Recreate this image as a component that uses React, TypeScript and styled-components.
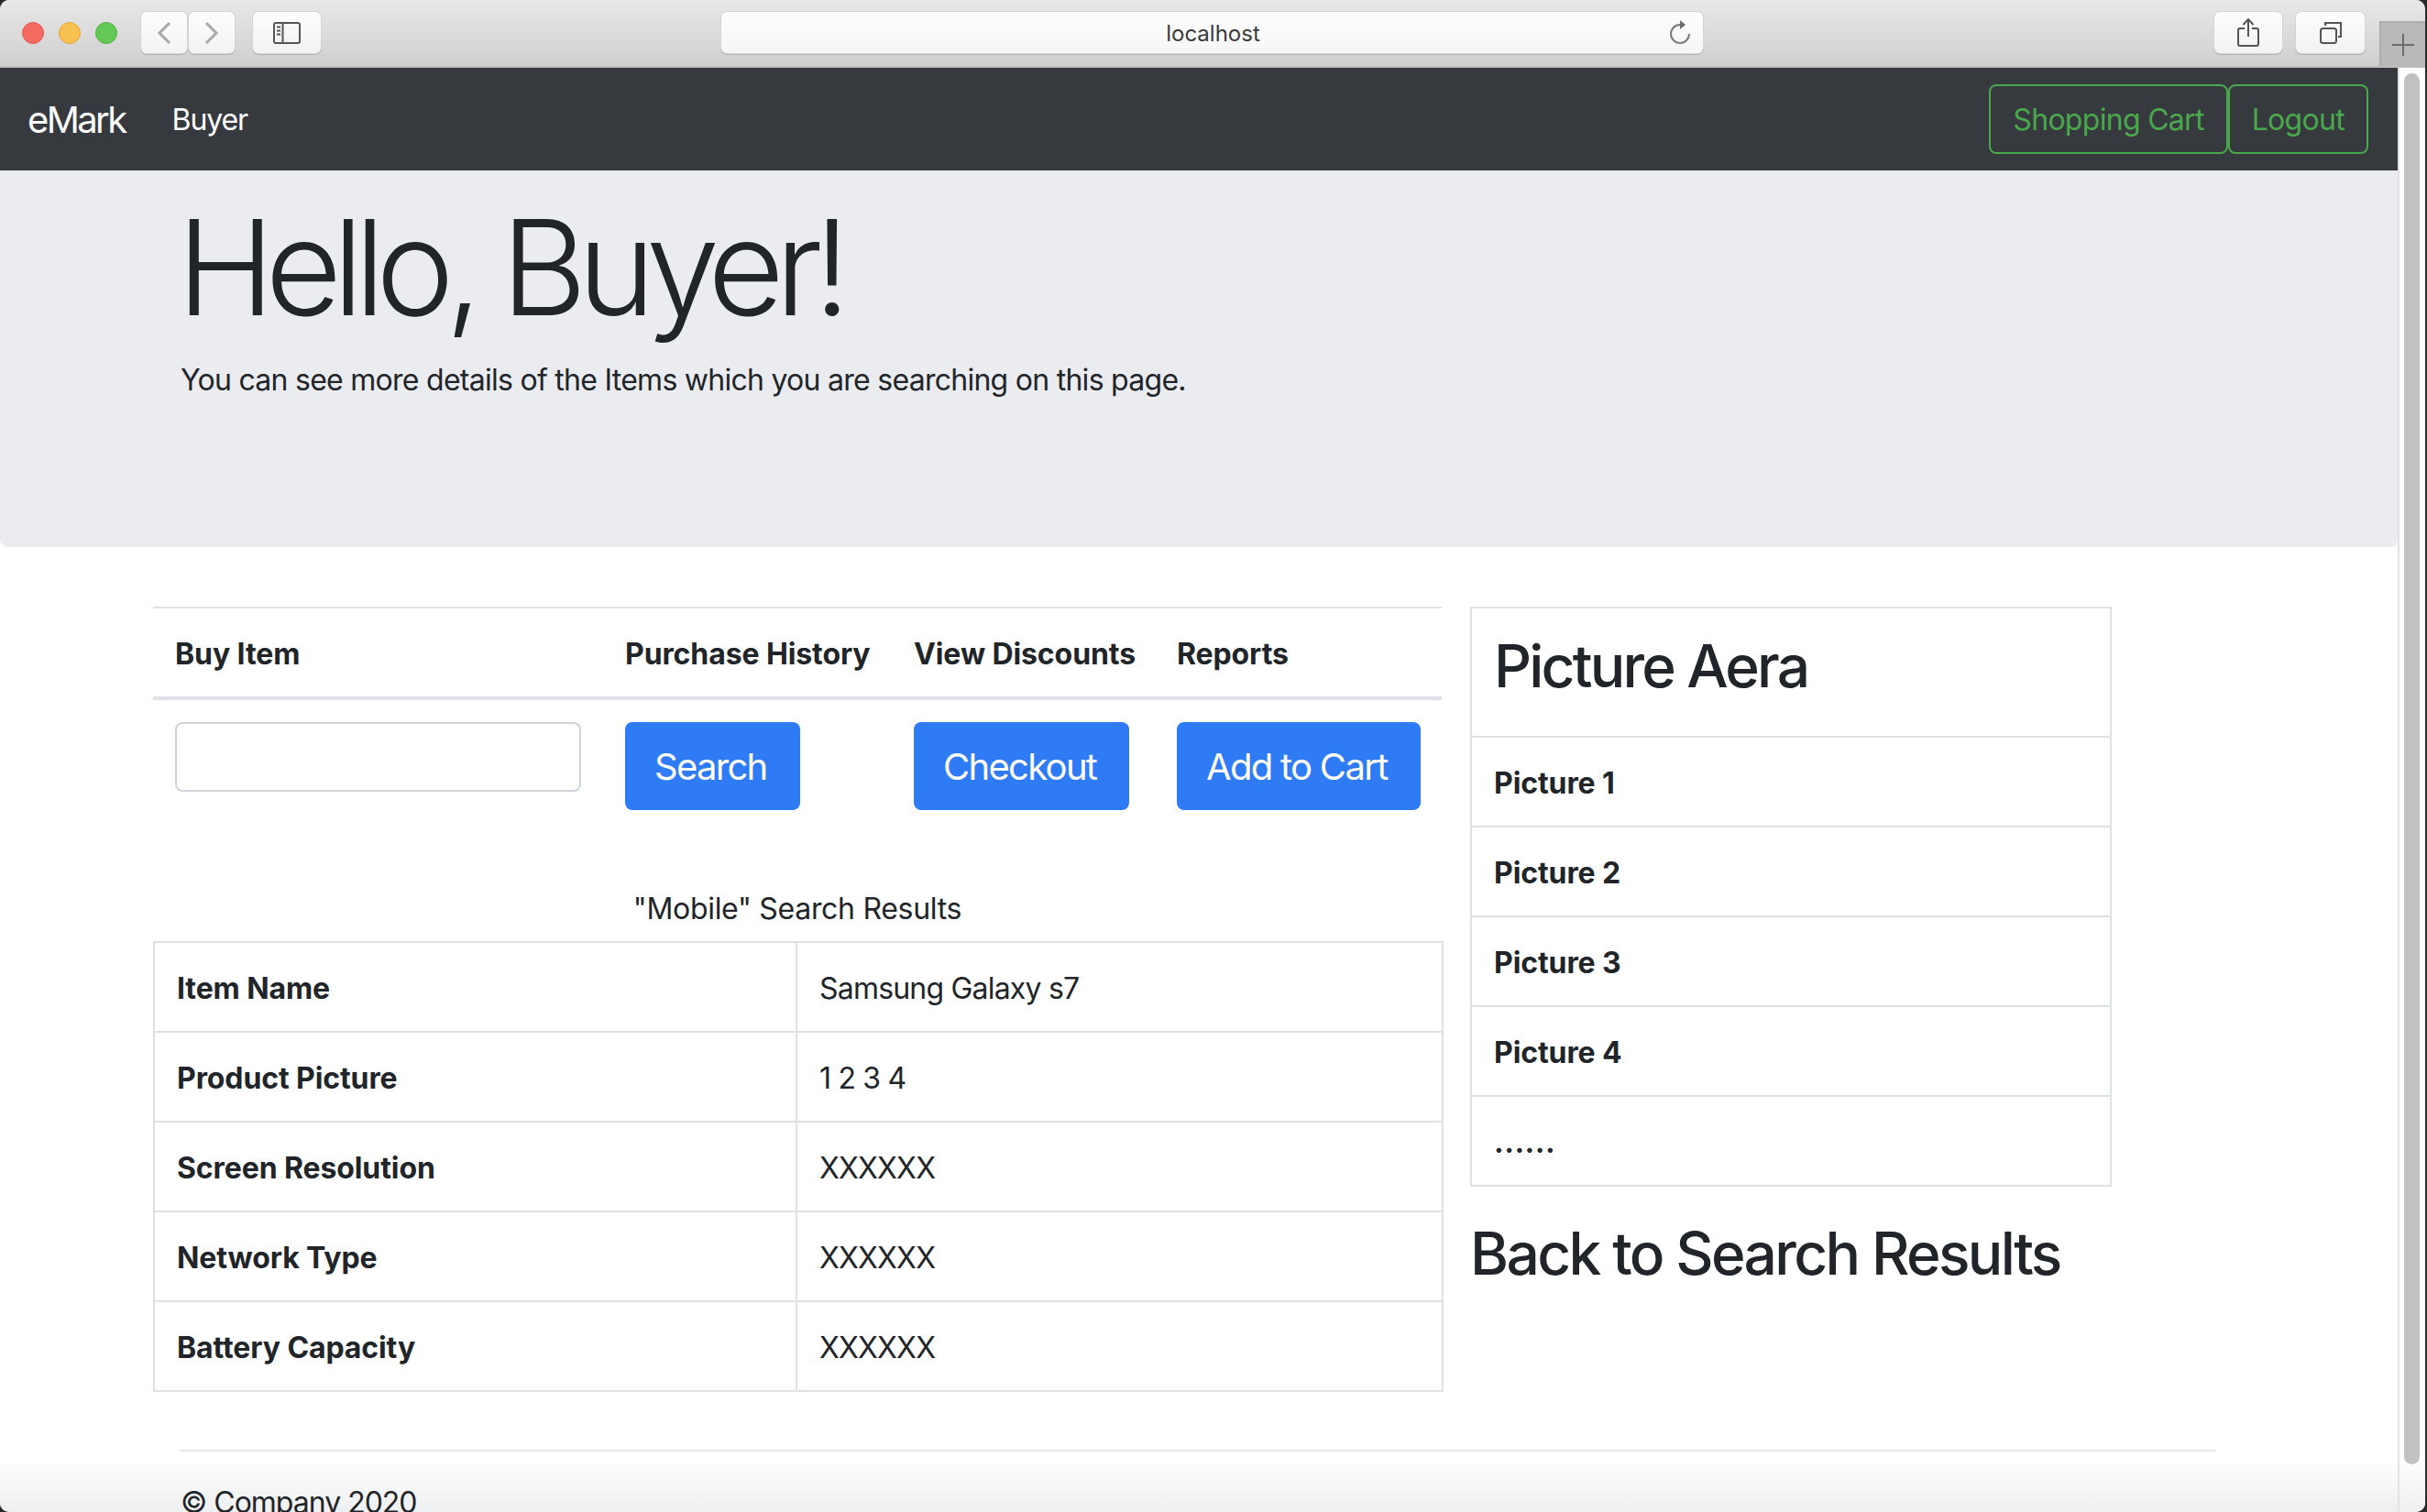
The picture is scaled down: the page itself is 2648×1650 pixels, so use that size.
import React from 'react';
import styled, { createGlobalStyle } from 'styled-components';

const GlobalStyle = createGlobalStyle`
  html, body {
    margin: 0;
    padding: 0;
    height: 100%;
    overflow: hidden;
    background: #2a2a2c;
  }
  * {
    box-sizing: border-box;
  }
  body {
    font-family: Inter, "Liberation Sans", sans-serif;
    color: #212529;
  }
`;

const Screen = styled.div`
  width: 2648px;
  height: 1650px;
  padding-right: 2px;
  background: #2a2a2c;
`;

const Window = styled.div`
  width: 100%;
  height: 100%;
  overflow: hidden;
  display: flex;
  flex-direction: column;
  border-radius: 10px;
  background: #fff;
`;

const TitleBar = styled.div`
  flex: none;
  height: 74px;
  display: flex;
  align-items: flex-start;
  padding: 13px 0 0 24px;
  background: linear-gradient(#e8e8e8, #cfcfcf);
  border-bottom: 2px solid #bdbdbd;
`;

const Lights = styled.div`
  display: flex;
  gap: 16px;
  margin: 11px 26px 0 0;
`;

const Light = styled.span<{ $color: string; $edge: string }>`
  width: 24px;
  height: 24px;
  border-radius: 50%;
  background: ${(p) => p.$color};
  border: 1px solid ${(p) => p.$edge};
`;

const ChromeButton = styled.div<{ $width: number }>`
  width: ${(p) => p.$width}px;
  height: 45px;
  flex: none;
  display: flex;
  align-items: center;
  justify-content: center;
  background: linear-gradient(#fdfdfd, #f2f2f2);
  border-radius: 6px;
  box-shadow: 0 0 0 1px #d4d4d4, 0 1px 0 1px #b4b4b4;
`;

const NavGroup = styled.div`
  display: flex;
  gap: 2px;
  margin-right: 20px;
`;

const UrlBar = styled.div`
  position: relative;
  width: 1071px;
  height: 45px;
  margin: 0 auto 0 437px;
  padding: 2px 0 0 2px;
  display: flex;
  align-items: center;
  justify-content: center;
  background: linear-gradient(#fdfdfd, #f6f6f6);
  border-radius: 6px;
  box-shadow: 0 0 0 1px #d4d4d4, 0 1px 0 1px #b4b4b4;
  font-size: 24px;
  color: #3a3a3a;
`;

const ReloadIcon = styled.svg`
  position: absolute;
  right: 13px;
  top: 8px;
`;

const RightTools = styled.div`
  display: flex;
  gap: 15px;
  margin-right: 16px;
`;

const NewTab = styled.div`
  width: 50px;
  height: 49px;
  margin-top: 10px;
  flex: none;
  display: flex;
  align-items: center;
  justify-content: center;
  background: #b9b9b9;
  border: solid #adadad;
  border-width: 2px 0 0 2px;
`;

const Body = styled.div`
  flex: 1;
  min-height: 0;
  display: flex;
  background: linear-gradient(#fff calc(100% - 58px), #eeeff0);
`;

const Page = styled.div`
  flex: 1;
  min-width: 0;
  overflow: hidden;
`;

const Navbar = styled.nav`
  height: 112px;
  display: flex;
  align-items: center;
  padding: 0 32px 0 30px;
  background: #363a3f;
`;

const Brand = styled.a`
  font-size: 40px;
  color: #fff;
  margin-right: 51px;
  letter-spacing: -2.6px;
`;

const NavLink = styled.a`
  font-size: 32px;
  color: #fff;
  margin-right: auto;
  letter-spacing: -1.1px;
`;

const OutlineButton = styled.button`
  height: 76px;
  padding: 0 24px;
  font: inherit;
  font-size: 32px;
  letter-spacing: -0.7px;
  color: #4aa84c;
  background: transparent;
  border: 2px solid #4aa84c;
  border-radius: 8px;
`;

const Jumbotron = styled.section`
  height: 411px;
  padding: 20px 197px 0;
  background: #ebecf0;
  border-radius: 0 0 8px 8px;
`;

const Hello = styled.h1`
  margin: 0 0 0 -4px;
  font-size: 144px;
  line-height: 1.2;
  font-weight: 300;
  letter-spacing: -10px;
`;

const Lead = styled.p`
  margin: 12px 0 0;
  font-size: 32px;
  line-height: 48px;
  letter-spacing: -0.73px;
`;

const Content = styled.div`
  display: flex;
  align-items: flex-start;
  gap: 31px;
  padding: 65px 0 0 167px;
`;

const LeftColumn = styled.div`
  width: 1406px;
`;

const RightColumn = styled.div`
  width: 700px;
`;

const ActionTable = styled.table`
  width: 100%;
  border-collapse: collapse;
  table-layout: fixed;
`;

const ActionHead = styled.th`
  padding: 26px 24px 22px;
  height: 99px;
  text-align: left;
  font-size: 32px;
  line-height: 48px;
  font-weight: 700;
  letter-spacing: -0.1px;
  white-space: nowrap;
  border-top: 2px solid #dee2e6;
  border-bottom: 4px solid #dee2e6;
`;

const ActionCell = styled.td`
  padding: 24px;
  vertical-align: top;
`;

const TextInput = styled.input`
  display: block;
  width: 100%;
  height: 76px;
  border: 2px solid #ced4da;
  border-radius: 8px;
  background: #fff;
`;

const PrimaryButton = styled.button`
  height: 96px;
  padding: 0 36px 0 32px;
  font: inherit;
  font-size: 40px;
  letter-spacing: -1.7px;
  white-space: nowrap;
  color: #fff;
  background: #2f7bf6;
  border: 0;
  border-radius: 8px;
`;

const Caption = styled.div`
  margin-top: 60px;
  padding-bottom: 11px;
  text-align: center;
  font-size: 32px;
  line-height: 48px;
  letter-spacing: -0.3px;
`;

const DetailTable = styled.table`
  width: 100%;
  border-collapse: collapse;
  table-layout: fixed;
`;

const DetailHead = styled.th`
  height: 98px;
  padding: 26px 24px 22px;
  text-align: left;
  font-size: 32px;
  line-height: 48px;
  font-weight: 700;
  letter-spacing: -0.1px;
  border: 2px solid #dee2e6;
`;

const DetailCell = styled.td`
  height: 98px;
  padding: 26px 24px 22px;
  font-size: 32px;
  line-height: 48px;
  letter-spacing: -0.8px;
  border: 2px solid #dee2e6;
`;

const Dots = styled(DetailCell)`
  font-weight: 700;
  letter-spacing: 0.5px;
`;

const PictureTitle = styled.h2`
  margin: -2px 0 16px;
  font-size: 64px;
  line-height: 77px;
  font-weight: 550;
  letter-spacing: -2.8px;
`;

const BackLink = styled.h2`
  margin: 34px 0 0;
  font-size: 64px;
  line-height: 77px;
  font-weight: 550;
  letter-spacing: -2.6px;
`;

const Footer = styled.footer`
  margin: 63px 199px 0 197px;
  padding-top: 32px;
  border-top: 2px solid #e4e6e9;
  font-size: 32px;
  line-height: 48px;
  letter-spacing: -1px;
`;

const ScrollTrack = styled.div`
  width: 30px;
  flex: none;
  padding: 6px 6px 0 5px;
  border-left: 2px solid #e4e4e4;
`;

const ScrollThumb = styled.div`
  width: 17px;
  height: 1518px;
  border-radius: 9px;
  background: #c1c1c1;
`;

const rows = [
  ['Item Name', 'Samsung Galaxy s7'],
  ['Product Picture', '1 2 3 4'],
  ['Screen Resolution', 'XXXXXX'],
  ['Network Type', 'XXXXXX'],
  ['Battery Capacity', 'XXXXXX'],
];

export default function App() {
  return (
    <Screen>
      <GlobalStyle />
      <Window>
        <TitleBar>
          <Lights>
            <Light $color="#f46b60" $edge="#e0574c" />
            <Light $color="#f9c14f" $edge="#e3a73a" />
            <Light $color="#62c955" $edge="#50b045" />
          </Lights>
          <NavGroup>
            <ChromeButton $width={50}>
              <svg width="16" height="26" viewBox="0 0 16 26" fill="none" stroke="#a9a9a9" strokeWidth="3">
                <path d="M14 2 3 13l11 11" />
              </svg>
            </ChromeButton>
            <ChromeButton $width={50}>
              <svg width="16" height="26" viewBox="0 0 16 26" fill="none" stroke="#a9a9a9" strokeWidth="3">
                <path d="M2 2l11 11L2 24" />
              </svg>
            </ChromeButton>
          </NavGroup>
          <ChromeButton $width={74}>
            <svg width="30" height="24" viewBox="0 0 30 24" fill="none" stroke="#555" strokeWidth="2">
              <rect x="1" y="1" width="28" height="22" rx="2" />
              <path d="M10.500 1v22M4 5.500h4M4 9.500h4M4 13.500h4" />
            </svg>
          </ChromeButton>
          <UrlBar>
            localhost
            <ReloadIcon width="24" height="28" viewBox="0 0 24 28" fill="none" stroke="#7a7a7a" strokeWidth="2">
              <path d="M12 6a10 10 0 1 0 10 10" />
              <path d="M12 1l6 5-6 5z" fill="#6e6e6e" stroke="none" />
            </ReloadIcon>
          </UrlBar>
          <RightTools>
            <ChromeButton $width={74}>
              <svg width="24" height="31" viewBox="0 0 24 31" fill="none" stroke="#555" strokeWidth="2">
                <path d="M8 11H3a2 2 0 0 0-2 2v15a2 2 0 0 0 2 2h18a2 2 0 0 0 2-2V13a2 2 0 0 0-2-2h-5M12 20V1M6.500 7 12 1l5.500 6" />
              </svg>
            </ChromeButton>
            <ChromeButton $width={75}>
              <svg width="24" height="24" viewBox="0 0 24 24" fill="none" stroke="#555" strokeWidth="2">
                <rect x="1" y="7" width="17" height="16" rx="2.500" />
                <path d="M6 4V1h17v15h-3" />
              </svg>
            </ChromeButton>
          </RightTools>
          <NewTab>
            <svg width="24" height="24" viewBox="0 0 24 24" stroke="#6b6b6b" strokeWidth="2">
              <path d="M12 0v24M0 12h24" />
            </svg>
          </NewTab>
        </TitleBar>
        <Body>
          <Page>
            <Navbar>
              <Brand>eMark</Brand>
              <NavLink>Buyer</NavLink>
              <OutlineButton>Shopping Cart</OutlineButton>
              <OutlineButton>Logout</OutlineButton>
            </Navbar>
            <Jumbotron>
              <Hello>Hello, Buyer!</Hello>
              <Lead>You can see more details of the Items which you are searching on this page.</Lead>
            </Jumbotron>
            <Content>
              <LeftColumn>
                <ActionTable>
                  <colgroup>
                    <col width="491" />
                    <col width="315" />
                    <col width="287" />
                    <col width="313" />
                  </colgroup>
                  <thead>
                    <tr>
                      <ActionHead>Buy Item</ActionHead>
                      <ActionHead>Purchase History</ActionHead>
                      <ActionHead>View Discounts</ActionHead>
                      <ActionHead>Reports</ActionHead>
                    </tr>
                  </thead>
                  <tbody>
                    <tr>
                      <ActionCell><TextInput /></ActionCell>
                      <ActionCell><PrimaryButton>Search</PrimaryButton></ActionCell>
                      <ActionCell><PrimaryButton>Checkout</PrimaryButton></ActionCell>
                      <ActionCell><PrimaryButton>Add to Cart</PrimaryButton></ActionCell>
                    </tr>
                  </tbody>
                </ActionTable>
                <Caption>"Mobile" Search Results</Caption>
                <DetailTable>
                  <colgroup>
                    <col width="701" />
                    <col width="705" />
                  </colgroup>
                  <tbody>
                    {rows.map(([name, value]) => (
                      <tr key={name}>
                        <DetailHead>{name}</DetailHead>
                        <DetailCell>{value}</DetailCell>
                      </tr>
                    ))}
                  </tbody>
                </DetailTable>
              </LeftColumn>
              <RightColumn>
                <DetailTable>
                  <tbody>
                    <tr>
                      <DetailHead><PictureTitle>Picture Aera</PictureTitle></DetailHead>
                    </tr>
                    <tr><DetailHead>Picture 1</DetailHead></tr>
                    <tr><DetailHead>Picture 2</DetailHead></tr>
                    <tr><DetailHead>Picture 3</DetailHead></tr>
                    <tr><DetailHead>Picture 4</DetailHead></tr>
                    <tr><Dots>......</Dots></tr>
                  </tbody>
                </DetailTable>
                <BackLink>Back to Search Results</BackLink>
              </RightColumn>
            </Content>
            <Footer>© Company 2020</Footer>
          </Page>
          <ScrollTrack>
            <ScrollThumb />
          </ScrollTrack>
        </Body>
      </Window>
    </Screen>
  );
}
